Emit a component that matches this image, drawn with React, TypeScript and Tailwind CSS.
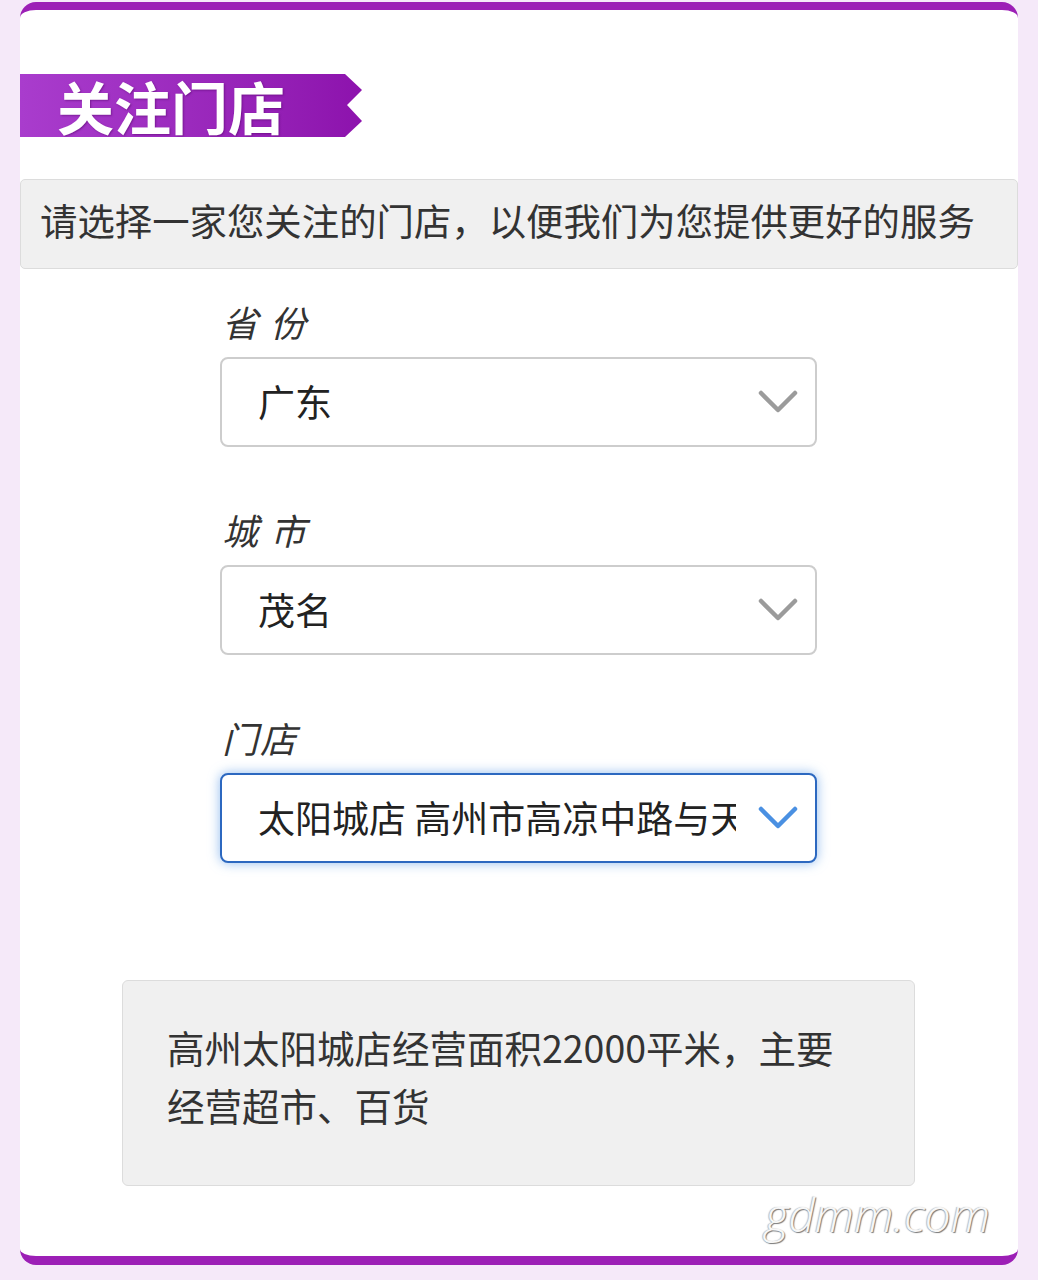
const cjk = { fontFamily: '"Noto Sans CJK SC", "Noto Sans", sans-serif' };

function Chevron({ color }: { color: string }) {
  return (
    <svg width="40" height="24" viewBox="0 0 40 24" fill="none">
      <path d="M3 3 L20 20 L37 3" stroke={color} strokeWidth="4.5" strokeLinecap="round" strokeLinejoin="round" />
    </svg>
  );
}

function Field({ label, value, active, mt }: { label: string; value: string; active?: boolean; mt: string }) {
  return (
    <div className={`ml-[200px] w-[597px] ${mt}`}>
      <div className="h-[40px] leading-[40px] text-[36px] italic text-[#333] pl-[2px] tracking-[2px]">{label}</div>
      <div
        className={
          active
            ? "mt-[16px] h-[90px] rounded-[8px] border-2 border-[#2c68c0] shadow-[0_0_12px_rgba(74,144,226,0.6)] bg-white flex items-center pl-[36px] pr-[17px]"
            : "mt-[16px] h-[90px] rounded-[8px] border-2 border-[#cdcdcd] bg-white flex items-center pl-[36px] pr-[17px]"
        }
      >
        <div className="flex-1 overflow-hidden whitespace-nowrap text-[37px] text-[#222] mr-[22px]">{value}</div>
        <Chevron color={active ? "#4a90e2" : "#9b9b9b"} />
      </div>
    </div>
  );
}

export default function App() {
  return (
    <div className="min-h-[1280px] bg-[#f5e9f9] pt-[2px] px-[20px]" style={cjk}>
      <div className="w-[998px] h-[1263px] bg-white rounded-[16px] border-t-[8px] border-b-[9px] border-[#9c1fb6] flex flex-col">
        {/* title ribbon */}
        <div className="mt-[64px] w-[342px] h-[63px] bg-gradient-to-r from-[#a93ccd] to-[#8d12ad] [clip-path:polygon(0_0,325px_0,342px_16px,327px_31px,342px_47px,325px_63px,0_63px)] flex items-center pl-[37px]">
          <span className="text-[57px] font-bold text-white leading-none [text-shadow:1px_1px_2px_rgba(80,0,100,0.5)]">关注门店</span>
        </div>

        {/* hint bar */}
        <div className="mt-[42px] h-[90px] bg-[#f0f0f0] border border-[#dcdcdc] rounded-[5px] flex items-center pl-[19px] pb-[8px]">
          <span className="text-[37.4px] text-[#333] whitespace-nowrap">请选择一家您关注的门店，以便我们为您提供更好的服务</span>
        </div>

        <Field label="省 份" value="广东" mt="mt-[32px]" />
        <Field label="城 市" value="茂名" mt="mt-[62px]" />
        <Field label="门店" value="太阳城店 高州市高凉中路与天马路交汇处" active mt="mt-[62px]" />

        {/* store description */}
        <div className="mt-[117px] ml-[102px] w-[793px] h-[206px] bg-[#f0f0f0] border border-[#dcdcdc] rounded-[6px] pt-[37px] pl-[44px] pr-[50px]">
          <p className="text-[37.5px] leading-[58px] text-[#333]">高州太阳城店经营面积22000平米，主要经营超市、百货</p>
        </div>

        <div className="mt-[2px] flex justify-end pr-[28px]">
          <span
            className="text-[46px] italic font-light text-[#f7f7f7] leading-[52px] [text-shadow:1px_1px_1px_#777,-1px_0_1px_#bbb]"
            style={{ fontFamily: '"Open Sans", "DejaVu Sans", sans-serif' }}
          >
            gdmm.com
          </span>
        </div>
      </div>
    </div>
  );
}
